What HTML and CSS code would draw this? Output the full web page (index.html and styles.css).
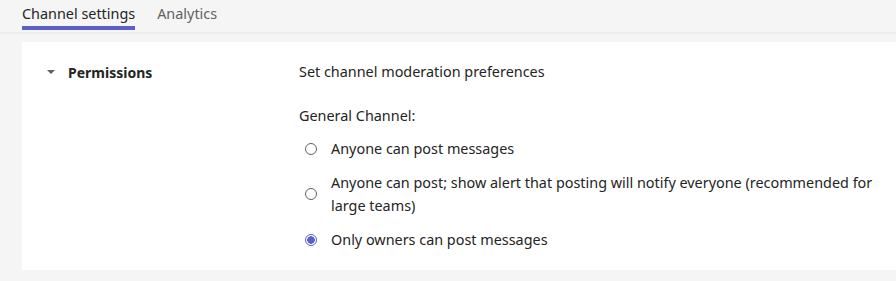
FILE: index.html
```html
<!DOCTYPE html>
<html lang="en">
<head>
  <meta charset="UTF-8">
  <title>Channel settings</title>
  <link rel="stylesheet" href="styles.css">
</head>
<body>
  <div class="tabs">
    <div class="tab active">Channel settings</div>
    <div class="tab">Analytics</div>
  </div>

  <div class="card">
    <div class="section-head">
      <span class="caret"></span>
      <span class="section-title">Permissions</span>
    </div>
    <div class="section-body">
      <div class="desc">Set channel moderation preferences</div>
      <div class="group-label">General Channel:</div>
      <label class="option">
        <span class="radio"></span>
        <span class="option-text">Anyone can post messages</span>
      </label>
      <label class="option">
        <span class="radio"></span>
        <span class="option-text">Anyone can post; show alert that posting will notify everyone (recommended for large teams)</span>
      </label>
      <label class="option">
        <span class="radio checked"></span>
        <span class="option-text">Only owners can post messages</span>
      </label>
    </div>
  </div>
</body>
</html>
```

FILE: styles.css
```css
body{
  margin: 0;
  background: #f5f5f5;
  font-family: "Noto Sans", "Open Sans", sans-serif;
  font-size: 14.4px;
  color: #242424;
  height: 281px;
  overflow: hidden;
}
.tabs{
  display: flex;
  gap: 22px;
  padding-left: 22px;
  height: 32px;
  border-bottom: 2px solid #ededed;
}
.tab{
  color: #616161;
  line-height: 28px;
  height: 32px;
  box-sizing: border-box;
}
.tab.active{
  color: #242424;
  border-bottom: 4px solid #5b5fc7;
  margin-bottom: -2px;
  height: 30px;
}
.card{
  display: flex;
  background: #fff;
  margin: 8px 0 0 22px;
  height: 228px;
  padding-top: 19px;
  box-sizing: border-box;
}
.section-head{
  display: flex;
  align-items: center;
  width: 277px;
  height: 22px;
  padding-left: 25px;
  box-sizing: border-box;
}
.caret{
  width: 0;
  height: 0;
  border-left: 4px solid transparent;
  border-right: 4px solid transparent;
  border-top: 4px solid #616161;
  margin-right: 13px;
}
.section-title{
  font-weight: bold;
  font-size: 14px;
}
.section-body{
  flex: 1;
  padding-right: 12px;
}
.desc{
  line-height: 22px;
  margin-bottom: 22px;
}
.group-label{
  line-height: 22px;
  margin-bottom: 10px;
}
.option{
  display: flex;
  align-items: center;
  line-height: 23px;
  margin-bottom: 11px;
}
.radio{
  flex: none;
  width: 12px;
  height: 12px;
  border: 1px solid #616161;
  border-radius: 50%;
  margin: 0 14px 0 6px;
  box-sizing: border-box;
}
.radio.checked{
  border-color: #5b5fc7;
  background: radial-gradient(circle, #5b5fc7 3.5px, #fff 4px);
}
```
